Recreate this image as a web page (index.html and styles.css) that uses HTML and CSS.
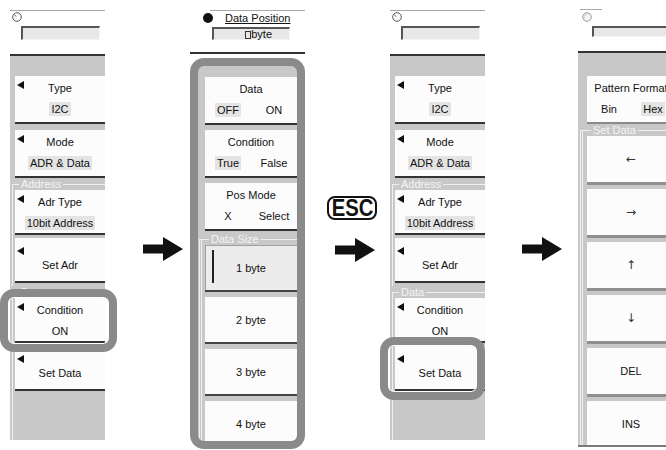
FILE: index.html
```html
<!DOCTYPE html>
<html lang="en">
<head>
    <meta charset="UTF-8">
    <meta name="viewport" content="width=device-width, initial-scale=1.0">
    <title>I2C Trigger - Set Data</title>
    <link rel="stylesheet" href="styles.css">
</head>
<body>
    <div class="figure">
        <!-- step 1: trigger menu, Condition is ON -->
        <section class="menu menu-side">
            <div class="head">
                <div class="rule"></div>
                <svg class="knob" viewBox="0 0 10 10"><circle cx="5" cy="5" r="4.3" fill="#fff" stroke="#555"/><path d="M2.5 3 4.4 4.6" stroke="#555"/></svg>
                <div class="entry"></div>
            </div>
            <div class="body">
                <div class="key pick"><span class="name">Type</span><div class="vals"><span class="val on">I2C</span></div></div>
                <div class="key pick"><span class="name">Mode</span><div class="vals"><span class="val on">ADR &amp; Data</span></div></div>
                <fieldset class="group">
                    <legend>Address</legend>
                    <div class="key pick"><span class="name">Adr Type</span><div class="vals"><span class="val on">10bit Address</span></div></div>
                    <div class="key pick solo"><span class="name">Set Adr</span></div>
                </fieldset>
                <fieldset class="group">
                    <legend>Data</legend>
                    <div class="key pick"><span class="name">Condition</span><div class="vals"><span class="val">ON</span></div></div>
                    <div class="key pick solo"><span class="name">Set Data</span></div>
                </fieldset>
            </div>
        </section>

        <div class="step step-1">
            <svg class="arrow" viewBox="0 0 40 24"><path d="M0 7.5H20V0L40 12 20 24V16.5H0Z"/></svg>
        </div>

        <!-- step 2: data position / data size menu -->
        <section class="menu menu-size">
            <div class="head">
                <div class="rule"></div>
                <div class="probe"><span class="dot"></span><span class="probe-name">Data Position</span></div>
                <div class="entry"><span class="cursor"></span>byte</div>
            </div>
            <div class="frame">
                <div class="key"><span class="name">Data</span><div class="vals pair"><span class="val on">OFF</span><span class="val">ON</span></div></div>
                <div class="key"><span class="name">Condition</span><div class="vals pair"><span class="val on">True</span><span class="val">False</span></div></div>
                <div class="key"><span class="name">Pos Mode</span><div class="vals pair"><span class="val">X</span><span class="val">Select</span></div></div>
                <fieldset class="group dbl">
                    <legend>Data Size</legend>
                    <div class="key plain chosen">1 byte</div>
                    <div class="key plain">2 byte</div>
                    <div class="key plain">3 byte</div>
                    <div class="key plain">4 byte</div>
                </fieldset>
            </div>
        </section>

        <div class="step step-2">
            <div class="esc"><span>ESC</span></div>
            <svg class="arrow" viewBox="0 0 40 24"><path d="M0 7.5H20V0L40 12 20 24V16.5H0Z"/></svg>
        </div>

        <!-- step 3: back in trigger menu -->
        <section class="menu menu-side">
            <div class="head">
                <div class="rule"></div>
                <svg class="knob" viewBox="0 0 10 10"><circle cx="5" cy="5" r="4.3" fill="#fff" stroke="#555"/><path d="M2.5 3 4.4 4.6" stroke="#555"/></svg>
                <div class="entry"></div>
            </div>
            <div class="body">
                <div class="key pick"><span class="name">Type</span><div class="vals"><span class="val on">I2C</span></div></div>
                <div class="key pick"><span class="name">Mode</span><div class="vals"><span class="val on">ADR &amp; Data</span></div></div>
                <fieldset class="group">
                    <legend>Address</legend>
                    <div class="key pick"><span class="name">Adr Type</span><div class="vals"><span class="val on">10bit Address</span></div></div>
                    <div class="key pick solo"><span class="name">Set Adr</span></div>
                </fieldset>
                <fieldset class="group">
                    <legend>Data</legend>
                    <div class="key pick"><span class="name">Condition</span><div class="vals"><span class="val">ON</span></div></div>
                    <div class="key pick solo"><span class="name">Set Data</span></div>
                </fieldset>
            </div>
        </section>

        <div class="step step-3">
            <svg class="arrow" viewBox="0 0 40 24"><path d="M0 7.5H20V0L40 12 20 24V16.5H0Z"/></svg>
        </div>

        <!-- step 4: set data menu -->
        <section class="menu menu-data">
            <div class="head">
                <div class="rule"></div>
                <svg class="knob" viewBox="0 0 10 10"><circle cx="5" cy="5" r="4.3" fill="#f4f4f4" stroke="#9a9a9a"/><path d="M2.2 6.5A3.4 3.4 0 0 1 6.5 2.2" fill="none" stroke="#d0d0d0"/></svg>
                <div class="entry"></div>
            </div>
            <div class="body">
                <div class="key"><span class="name">Pattern Format</span><div class="vals pair"><span class="val">Bin</span><span class="val on">Hex</span></div></div>
                <fieldset class="group dbl">
                    <legend>Set Data</legend>
                    <div class="key plain glyph">&larr;</div>
                    <div class="key plain glyph">&rarr;</div>
                    <div class="key plain glyph">&uarr;</div>
                    <div class="key plain glyph">&darr;</div>
                    <div class="key plain">DEL</div>
                    <div class="key plain">INS</div>
                </fieldset>
            </div>
        </section>

        <!-- highlight rings drawn over the menus -->
        <div class="ring ring-condition"></div>
        <div class="ring ring-setdata"></div>
    </div>
</body>
</html>
```

FILE: styles.css
```css
* {
    box-sizing: border-box;
}

body {
    margin: 0;
    background-color: #fff;
    font-family: "Liberation Sans", "DejaVu Sans", sans-serif;
    font-size: 11px;
    color: #111;
}

.figure {
    position: relative;
    display: flex;
    align-items: flex-start;
    width: 666px;
    height: 450px;
    overflow: hidden;
}

/* menus */
.menu {
    flex: none;
    display: flex;
    flex-direction: column;
}

.menu-side {
    width: 95px;
}

.menu-side:first-child {
    margin-left: 10px;
}

.menu-size {
    width: 115px;
}

.menu-data {
    width: 88px;
    overflow: hidden;
}

.head {
    height: 56px;
    background-color: #fff;
    border-bottom: 2px solid #333;
}

.rule {
    margin-top: 10px;
    border-top: 1px solid #a8a8a8;
}

.knob {
    display: block;
    width: 10px;
    height: 10px;
    margin: 1px 0 0 2px;
}

.entry {
    margin: 4px 0 0 11px;
    width: 79px;
    height: 14px;
    background-color: #e8e8e8;
    border-top: 2px solid #555;
    border-left: 2px solid #555;
    border-right: 1px solid #f4f4f4;
    border-bottom: 1px solid #f4f4f4;
}

.menu-size .head {
    height: 54px;
}

.menu-size .rule {
    margin-left: 20px;
}

.probe {
    display: flex;
    align-items: center;
    height: 12px;
    margin-top: 1px;
}

.dot {
    width: 10px;
    height: 10px;
    margin-left: 13px;
    border-radius: 50%;
    background-color: #111;
}

.probe-name {
    margin-left: 12px;
    line-height: 12px;
    text-decoration: underline;
}

.menu-size .entry {
    margin: 3px 0 0 22px;
    width: 78px;
    height: 13px;
    padding-right: 17px;
    text-align: right;
    line-height: 10px;
}

.cursor {
    display: inline-block;
    width: 6px;
    height: 8px;
    border: 1px solid #333;
    vertical-align: -1px;
}

.menu-data .head {
    height: 53px;
}

.menu-data .rule {
    width: 22px;
    margin: 9px 0 0 2px;
}

.menu-data .knob {
    margin: 2px 0 0 4px;
}

.menu-data .entry {
    margin: 4px 0 0 14px;
    width: 100px;
    height: 11px;
}

.body {
    display: flex;
    flex-direction: column;
    height: 384px;
    padding: 20px 0 0 5px;
    background-color: #c8c8c8;
}

.frame {
    display: flex;
    flex-direction: column;
    height: 391px;
    margin-top: 4px;
    padding: 11px 0 0 7px;
    border: 8px solid #8b8b8b;
    border-radius: 14px;
    background-color: #c8c8c8;
    overflow: hidden;
}

.menu-data .body {
    height: 394px;
    padding: 23px 0 0 9px;
    border-bottom: 2px solid #7a7a7a;
    overflow: hidden;
}

/* groups */
.group {
    flex: none;
    min-width: 0;
    margin: 0 0 0 -3px;
    padding: 0 0 0 2px;
    border: 0;
    border-top: 1px solid #efefef;
    border-left: 1px solid #efefef;
}

.menu-side .key + .group {
    margin-top: -6px;
}

.group:last-child {
    flex: 1;
}

.group legend {
    margin-left: 4px;
    padding: 0 2px;
    line-height: 12px;
    color: #f4f4f4;
}

.group.dbl {
    margin-left: -7px;
    padding-left: 4px;
    border-left: 3px double #efefef;
}

.frame .group.dbl {
    margin: -3px 0 0 -6px;
    padding-left: 3px;
}

/* softkeys */
.key {
    position: relative;
    flex: none;
    height: 48px;
    margin-bottom: 6px;
    padding-top: 5px;
    background-color: #fcfcfc;
    border-bottom: 2px solid #333;
    text-align: center;
    white-space: nowrap;
}

.key .name {
    display: block;
    line-height: 14px;
}

.vals {
    display: flex;
    justify-content: center;
    margin-top: 7px;
    line-height: 14px;
}

.vals.pair {
    display: grid;
    grid-template-columns: 1fr 1fr;
    justify-items: center;
}

.val {
    padding: 0 2px;
}

.val.on {
    background-color: #e4e4e4;
}

.pick::before {
    content: "";
    position: absolute;
    left: 2px;
    top: 5px;
    border-right: 7px solid #111;
    border-top: 4px solid transparent;
    border-bottom: 4px solid transparent;
}

.solo {
    padding-top: 20px;
}

.solo::before {
    top: 9px;
}

.group .key {
    height: 45px;
    margin-bottom: 3px;
}

.frame > .key {
    margin-bottom: 5px;
}

.plain {
    display: flex;
    align-items: center;
    justify-content: center;
    padding-top: 0;
}

.glyph {
    font-family: "DejaVu Sans", sans-serif;
    font-size: 12px;
    color: #333;
}

.frame .group .key {
    height: 47px;
    margin-bottom: 5px;
    border-bottom-color: #444;
}

.chosen {
    background-color: #ececec;
    box-shadow: inset 0 1px 0 #a0a0a0, inset 1px 0 0 #a0a0a0;
}

.chosen::before {
    content: "";
    position: absolute;
    left: 7px;
    top: 5px;
    width: 2px;
    height: 33px;
    background-color: #222;
}

.menu-data .key {
    width: 88px;
    margin-bottom: 0;
    border-bottom-color: #8a8a8a;
}

.menu-data .group .key {
    height: 49px;
    margin-bottom: 4px;
    border-bottom: 3px solid #8f8f8f;
}

/* steps between menus */
.step {
    flex: none;
    display: flex;
    flex-direction: column;
    align-items: flex-start;
}

.step-1 {
    width: 85px;
    padding: 237px 0 0 38px;
}

.step-2 {
    width: 85px;
    padding: 196px 0 0 22px;
}

.step-3 {
    width: 93px;
    padding: 237px 0 0 37px;
}

.arrow {
    display: block;
    width: 40px;
    height: 24px;
    fill: #111;
}

.esc {
    width: 50px;
    height: 24px;
    margin-bottom: 18px;
    border: 2px solid #111;
    border-radius: 8px;
    text-align: center;
    line-height: 20px;
}

.esc span {
    display: inline-block;
    font-size: 23px;
    font-weight: bold;
    color: #111;
    transform: scaleX(0.88);
}

.step-2 .arrow {
    margin-left: 8px;
}

/* highlight rings */
.ring {
    position: absolute;
    border: 8px solid #8a8a8a;
    border-radius: 14px;
    box-shadow: inset 0 0 0 1px #fff;
}

.ring-condition {
    left: 0;
    top: 289px;
    width: 117px;
    height: 63px;
}

.ring-setdata {
    left: 380px;
    top: 337px;
    width: 105px;
    height: 63px;
}
```
